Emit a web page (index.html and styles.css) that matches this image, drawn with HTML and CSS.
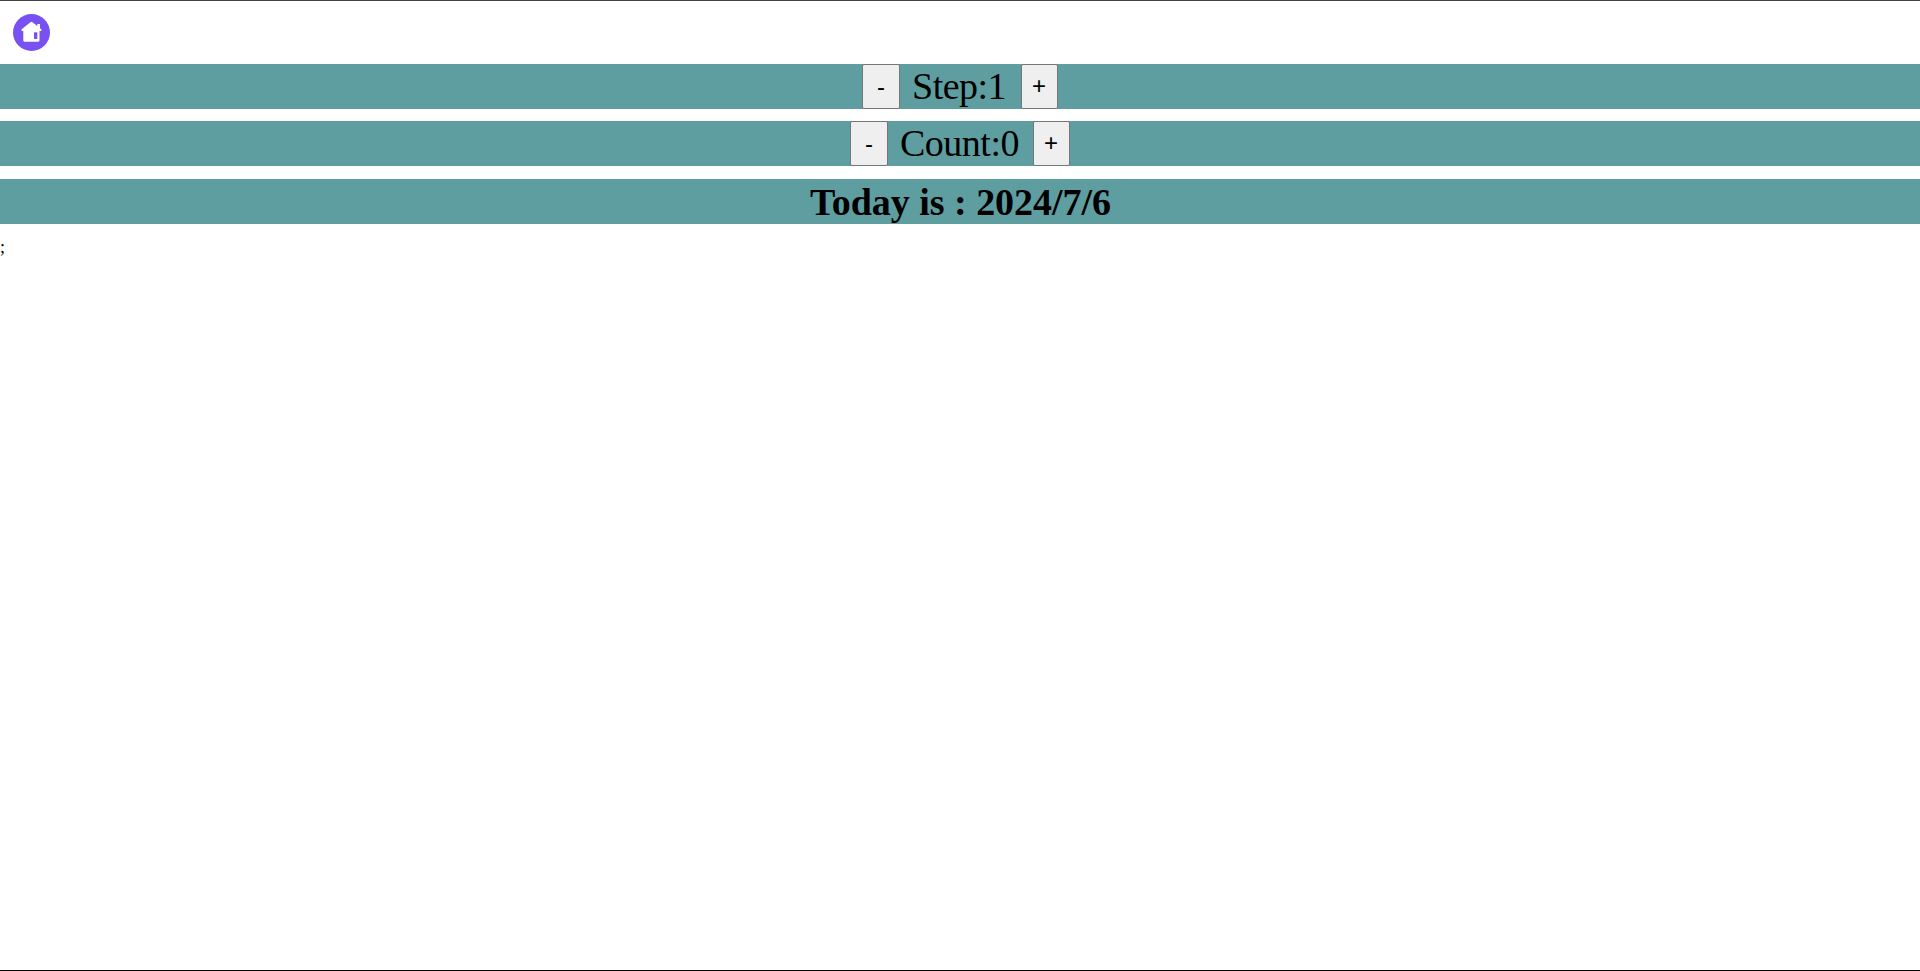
FILE: index.html
```html
<!DOCTYPE html>
<html lang="en">
<head>
<meta charset="utf-8">
<title>Date Counter</title>
<link rel="stylesheet" href="styles.css">
</head>
<body>
<header class="header">
<svg class="home" viewBox="0 0 37 37" aria-label="Home"><circle cx="18.5" cy="18.5" r="18.5" fill="#7950f2"/><path d="M17.8 8.1 8.6 15.3Q7.8 16.7 9.2 17H10.3V26.3Q10.3 27.8 11.8 27.8H25Q26.5 27.8 26.5 26.3V17H27.8Q29.2 16.7 28.4 15.4L27 14.2V10H24.3V12L19.2 8.1Q18.5 7.6 17.8 8.1Z" fill="#fff"/><path d="M21 18.3h3.3v6.7h-3.3z" fill="#7950f2"/></svg>
</header>
<main>
<div class="bar"><button class="btn minus">-</button><span class="label step">Step:1</span><button class="btn plus">+</button></div>
<div class="bar second"><button class="btn minus">-</button><span class="label count">Count:0</span><button class="btn plus">+</button></div>
<div class="bar today"><strong class="date">Today is : 2024/7/6</strong></div>
<div class="tail">;</div>
</main>
</body>
</html>
```
FILE: styles.css
```css
* { box-sizing: border-box; }
body {
  margin: 0;
  height: 971px;
  border-top: 1px solid #444;
  border-bottom: 1px solid #000;
  background: #fff;
  color: #000;
  font: 16px "Liberation Serif", serif;
  overflow: hidden;
}
.header { height: 63px; padding: 13px; }
.home { display: block; width: 37px; height: 37px; }
.bar {
  display: flex;
  justify-content: center;
  align-items: center;
  height: 45px;
  margin-bottom: 12px;
  background: #5f9ea0;
}
.second { margin-bottom: 13px; }
.btn {
  height: 45px;
  padding: 0;
  border: 1px solid #767676;
  border-radius: 2px;
  background: #efefef;
  color: #000;
  font: 24px "Liberation Sans", sans-serif;
}
.minus { width: 38px; }
.plus { width: 37px; padding: 0 1px 2px 0; }
.label { padding-left: 12px; font-size: 38px; line-height: 45px; white-space: nowrap; }
.step { width: 121px; letter-spacing: -0.5px; }
.count { width: 145px; letter-spacing: -0.5px; }
.date { padding: 2px 0 0 1px; font-size: 38px; line-height: 45px; letter-spacing: -0.03px; white-space: nowrap; }
.tail { padding-top: 2px; font-size: 18px; line-height: 18px; }
```
